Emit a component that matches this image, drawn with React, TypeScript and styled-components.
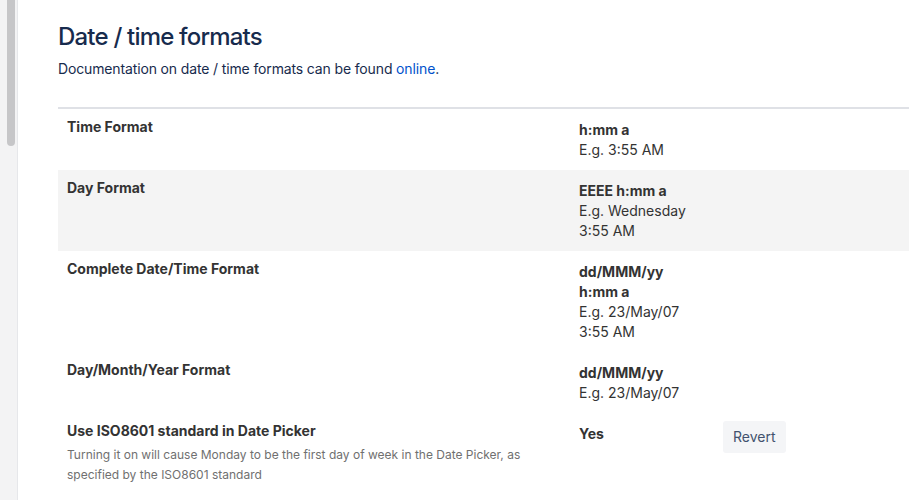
import styled, { createGlobalStyle } from "styled-components";

type FormatRow = {
  label: string;
  description?: string;
  pattern: string[];
  example: string[];
  action?: string;
  highlighted?: boolean;
};

const rows: FormatRow[] = [
  { label: "Time Format", pattern: ["h:mm a"], example: ["E.g. 3:55 AM"] },
  {
    label: "Day Format",
    pattern: ["EEEE h:mm a"],
    example: ["E.g. Wednesday", "3:55 AM"],
    highlighted: true,
  },
  {
    label: "Complete Date/Time Format",
    pattern: ["dd/MMM/yy", "h:mm a"],
    example: ["E.g. 23/May/07", "3:55 AM"],
  },
  { label: "Day/Month/Year Format", pattern: ["dd/MMM/yy"], example: ["E.g. 23/May/07"] },
  {
    label: "Use ISO8601 standard in Date Picker",
    description:
      "Turning it on will cause Monday to be the first day of week in the Date Picker, as specified by the ISO8601 standard",
    pattern: ["Yes"],
    example: [],
    action: "Revert",
  },
];

const App: React.FC = () => {
  return (
    <>
      <GlobalStyle />
      <StyledPage>
        <Sidebar>
          <ScrollThumb />
        </Sidebar>
        <Main>
          <Title>Date / time formats</Title>
          <Intro>
            Documentation on date / time formats can be found <a href="#">online</a>.
          </Intro>
          <Table>
            <tbody>
              {rows.map((row) => (
                <Row key={row.label} $highlighted={!!row.highlighted}>
                  <LabelCell>
                    <div className="label">{row.label}</div>
                    {row.description && <div className="description">{row.description}</div>}
                  </LabelCell>
                  <ValueCell>
                    {row.pattern.map((line) => (
                      <div className="pattern" key={line}>
                        {line}
                      </div>
                    ))}
                    {row.example.map((line) => (
                      <div key={line}>{line}</div>
                    ))}
                  </ValueCell>
                  <ActionCell>{row.action && <Button>{row.action}</Button>}</ActionCell>
                </Row>
              ))}
            </tbody>
          </Table>
        </Main>
      </StyledPage>
    </>
  );
};

const GlobalStyle = createGlobalStyle`
  html, body {
    margin: 0;
    padding: 0;
    background: #ffffff;
    overflow: hidden;
  }

  body {
    font-family: Inter, "Noto Sans", "Liberation Sans", sans-serif;
    font-size: 14px;
    line-height: 20px;
    color: #172b4d;
  }
`;

const StyledPage = styled.div`
  display: flex;
  width: 909px;
  height: 500px;
  overflow: hidden;
`;

const Sidebar = styled.div`
  flex: 0 0 18px;
  height: 100%;
  background: #f3f3f4;
  border-right: 1px solid #e6e7ea;
  box-sizing: border-box;
  padding-left: 7px;
`;

const ScrollThumb = styled.div`
  width: 8px;
  height: 146px;
  background: #c6c6c8;
  border-radius: 0 0 4px 4px;
`;

const Main = styled.div`
  flex: 1;
  padding: 23px 0 0 40px;
  min-width: 0;
`;

const Title = styled.h2`
  margin: 0;
  font-size: 24px;
  line-height: 28px;
  font-weight: 500;
  letter-spacing: -0.8px;
  color: #172b4d;
`;

const Intro = styled.p`
  margin: 8px 0 0;
  font-size: 14px;
  line-height: 20px;
  letter-spacing: -0.14px;
  color: #172b4d;

  a {
    color: #0052cc;
    text-decoration: none;
  }
`;

const Table = styled.table`
  margin-top: 28px;
  width: 900px;
  border-collapse: collapse;
  border-top: 2px solid #dfe1e6;
  table-layout: fixed;
`;

const Row = styled.tr<{ $highlighted: boolean }>`
  background: ${(props) => (props.$highlighted ? "#f4f4f4" : "transparent")};
  vertical-align: top;
`;

const LabelCell = styled.td`
  width: 492px;
  padding: 8px 10px 11px 9px;
  color: #333333;

  .label {
    font-weight: 700;
  }

  .description {
    margin-top: 4px;
    font-size: 12px;
    line-height: 20px;
    color: #707070;
  }
`;

const ValueCell = styled.td`
  width: 124px;
  padding: 11px 10px 10px 10px;
  color: #333333;

  .pattern {
    font-weight: 700;
  }
`;

const ActionCell = styled.td`
  padding: 8px 10px;
`;

const Button = styled.button`
  font-family: inherit;
  font-size: 14px;
  line-height: 20px;
  padding: 6px 10px;
  border: none;
  border-radius: 3px;
  background: #f4f5f7;
  color: #42526e;
  cursor: pointer;
`;

export default App;
